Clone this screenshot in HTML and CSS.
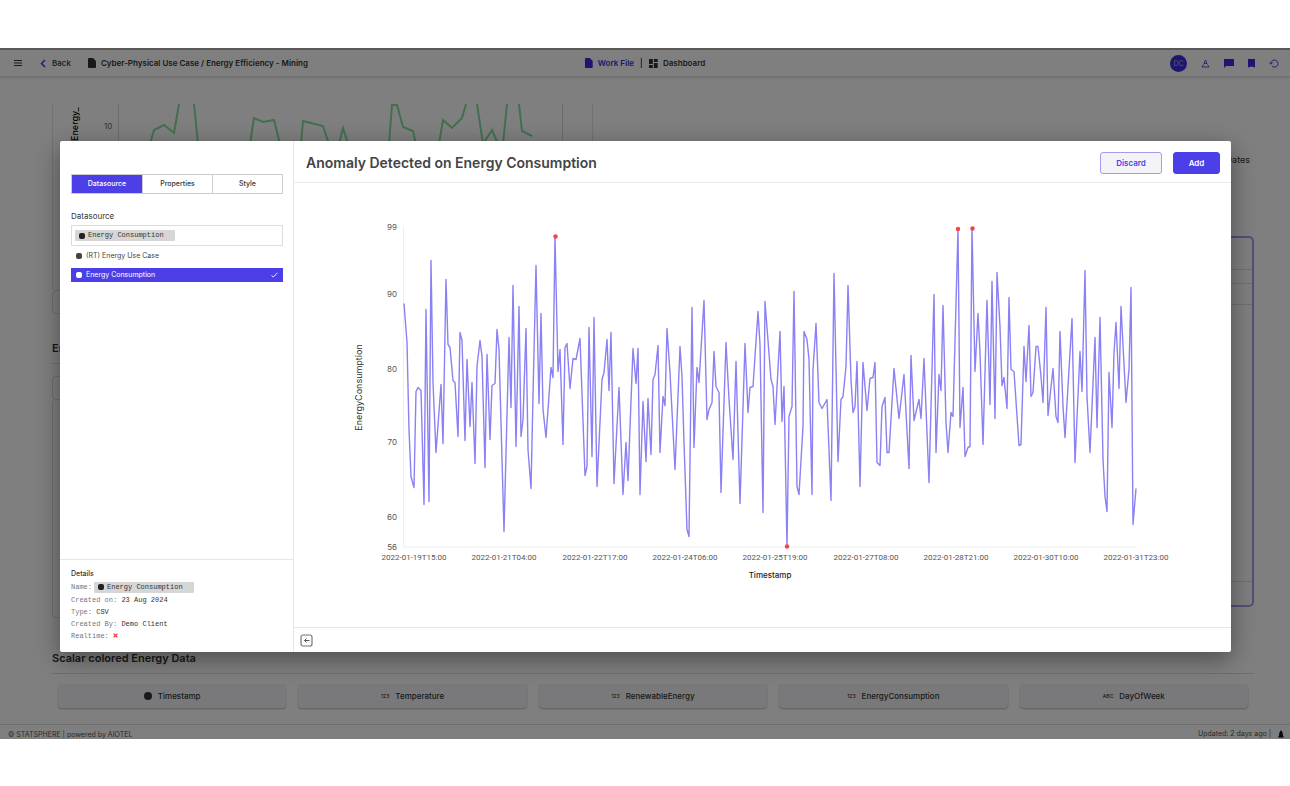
FILE: index.html
```html
<!DOCTYPE html>
<html lang="en">
<head>
<meta charset="utf-8">
<title>Energy Efficiency - Mining</title>
<link rel="stylesheet" href="styles.css">
</head>
<body>
<div class="app">
  <header class="topbar">
    <button class="icon-btn menu" aria-label="Menu"><svg width="8" height="8" viewBox="0 0 8 8"><path d="M0 1.5h8M0 4h8M0 6.5h8" stroke="currentColor" stroke-width="1.1"/></svg></button>
    <a href="#" class="back"><svg class="accent" width="6" height="9" viewBox="0 0 6 9"><path d="M5 1 1.5 4.500 5 8" fill="none" stroke="currentColor" stroke-width="1.4"/></svg>Back</a>
    <span class="crumb"><svg width="8" height="10" viewBox="0 0 8 10"><path d="M1 0h4l3 3v6q0 1-1 1H1q-1 0-1-1V1q0-1 1-1z" fill="currentColor"/></svg>Cyber-Physical Use Case / Energy Efficiency - Mining</span>
    <nav class="views">
      <a href="#" class="accent"><svg width="8" height="10" viewBox="0 0 8 10"><path d="M1 0h4l3 3v6q0 1-1 1H1q-1 0-1-1V1q0-1 1-1z" fill="currentColor"/></svg>Work File</a>
      <span class="bar"></span>
      <a href="#"><svg width="9" height="9" viewBox="0 0 9 9"><path d="M0 0h4v5H0zM5 0h4v3H5zM0 6h4v3H0zM5 4h4v5H5z" fill="currentColor"/></svg>Dashboard</a>
    </nav>
    <div class="tools accent">
      <span class="avatar">DC</span>
      <button class="icon-btn" aria-label="Download"><svg width="9" height="9" viewBox="0 0 9 9"><path d="M4.500 1 3 4.500h3L4.500 1M2.500 5.500 1 8h7L6.500 5.500" fill="none" stroke="currentColor" stroke-width=".8"/></svg></button>
      <button class="icon-btn" aria-label="Comments"><svg width="10" height="9" viewBox="0 0 10 9"><path d="M0 0h10v7H2L0 9z" fill="currentColor"/></svg></button>
      <button class="icon-btn" aria-label="Bookmark"><svg width="7" height="9" viewBox="0 0 7 9"><path d="M0 0h7v8.500L3.500 7.500 0 8.500z" fill="currentColor"/></svg></button>
      <button class="icon-btn" aria-label="History"><svg width="10" height="9" viewBox="0 0 10 9"><path d="M2 4.500a3.500 3.500 0 1 1 1 2.500M.3 3.500 2 5.200l1.600-1.700" fill="none" stroke="currentColor" stroke-width=".9"/></svg></button>
    </div>
  </header>

  <main class="work">
    <div class="columns">
      <div class="left-col">
        <div class="mini-card">
          <svg width="541" height="60" viewBox="52 104 541 60">
            <path d="M117.500 104v60M561.500 104v60" stroke="#d8d8d8"/>
            <text class="mini-axis" transform="translate(77 141) rotate(-90)">Energy_</text>
            <text class="mini-tick" x="103" y="129">10</text>
            <path class="mini-line" d="M149 144 153 130 163 125 173 133 178 104M193 104 197 144M249 144 253 118 262 122 273 120 279 144M300 144 302 121 322 126 328 144M338 144 342 128 347 144M388 144 391 105 396 105 402 127 412 131 415 144M438 144 442 120 451 128 461 118 465 104M476 104 482 144 491 130 497 144M502 144 506 104M518 104 521 131 531 136"/>
          </svg>
        </div>
        <div class="stub"></div>
        <h2>Energy</h2>
        <div class="stub"></div>
        <div class="tall"></div>
      </div>
      <div class="right-col">
        <p>Dates</p>
        <div class="selected"><i></i><i></i><i></i><i></i></div>
      </div>
    </div>
    <section class="fields">
      <h2>Scalar colored Energy Data</h2>
      <div class="chips">
        <button><svg width="8" height="8" viewBox="0 0 8 8"><circle cx="4" cy="4" r="4" fill="currentColor"/></svg>Timestamp</button>
        <button><small>123</small>Temperature</button>
        <button><small>123</small>RenewableEnergy</button>
        <button><small>123</small>EnergyConsumption</button>
        <button><small>ABC</small>DayOfWeek</button>
      </div>
    </section>
  </main>

  <footer class="foot">
    <span>© STATSPHERE | powered by AIOTEL</span>
    <span class="updated">Updated: 2 days ago |<svg width="6" height="8" viewBox="0 0 6 8"><path d="M3 0 4.800 3v2L6 7.500H0L1.200 5V3z" fill="#111"/></svg></span>
  </footer>

  <div class="overlay">
    <div class="modal" role="dialog" aria-labelledby="title">
      <aside class="side">
        <div class="settings">
          <div class="tabs" role="tablist">
            <button role="tab" aria-selected="true">Datasource</button>
            <button role="tab">Properties</button>
            <button role="tab">Style</button>
          </div>
          <label for="source">Datasource</label>
          <div class="combo">
            <span class="tag"><svg width="6" height="6" viewBox="0 0 6 6"><rect width="6" height="6" rx="2" fill="#222"/></svg>Energy Consumption</span>
            <input id="source" type="text">
          </div>
          <div class="options" role="listbox">
            <button role="option"><svg width="6" height="6" viewBox="0 0 6 6"><rect width="6" height="6" rx="2" fill="currentColor"/></svg>(RT) Energy Use Case</button>
            <button role="option" aria-selected="true"><svg width="6" height="6" viewBox="0 0 6 6"><rect width="6" height="6" rx="2" fill="currentColor"/></svg>Energy Consumption<svg class="tick" width="7" height="6" viewBox="0 0 7 6"><path d="M.5 3.500 2.300 5 6.500.8" fill="none" stroke="currentColor" stroke-width=".9"/></svg></button>
          </div>
        </div>
        <div class="details">
          <h3>Details</h3>
          <p class="named">Name:<span class="tag"><svg width="6" height="6" viewBox="0 0 6 6"><rect width="6" height="6" rx="2" fill="#222"/></svg>Energy Consumption</span></p>
          <p>Created on: <b>23 Aug 2024</b></p>
          <p>Type: <b>CSV</b></p>
          <p>Created By: <b>Demo Client</b></p>
          <p>Realtime: <svg width="5" height="5" viewBox="0 0 5 5"><path d="M.7.7l3.600 3.600M4.300.7.7 4.300" stroke="#f04a4a" stroke-width="1.500"/></svg></p>
        </div>
      </aside>
      <section class="body">
        <header class="body-head">
          <h1 id="title">Anomaly Detected on Energy Consumption</h1>
          <button class="discard">Discard</button>
          <button class="add">Add</button>
        </header>
        <div class="plot">
          <svg viewBox="294 184 937 443" role="img" aria-label="EnergyConsumption over Timestamp">
            <path d="M403.500 227V547.500H1137" fill="none" stroke="#eeeeee"/>
            <g class="tick-y">
              <text x="397" y="230">99</text><text x="397" y="297">90</text><text x="397" y="372">80</text><text x="397" y="445">70</text><text x="397" y="520">60</text><text x="397" y="550">56</text>
            </g>
            <g class="tick-x">
              <text x="414" y="560">2022-01-19T15:00</text><text x="504" y="560">2022-01-21T04:00</text><text x="595" y="560">2022-01-22T17:00</text><text x="685" y="560">2022-01-24T06:00</text><text x="775" y="560">2022-01-25T19:00</text><text x="866" y="560">2022-01-27T08:00</text><text x="956" y="560">2022-01-28T21:00</text><text x="1046" y="560">2022-01-30T10:00</text><text x="1136" y="560">2022-01-31T23:00</text>
            </g>
            <text class="name-x" x="770" y="578">Timestamp</text>
            <text class="name-y" transform="translate(362 388) rotate(-90)">EnergyConsumption</text>
            <polyline class="series" points="404,304 407,343 409,430 411,477 414,488 416,392 418,388 421,391 424,505 426,310 429,502 431,261 433,383 436,453 441,385 443,444 446,280 448,345 450,348 453,381 455,383 458,437 460,333 462,341 465,441 467,360 470,427 472,383 475,464 477,367 480,341 482,357 485,468 487,355 490,440 492,386 495,384 497,330 499,350 504,532 509,338 511,408 513,286 516,447 519,307 521,437 523,420 526,329 528,450 531,489 533,396 536,266 539,404 541,314 543,410 546,438 551,368 553,378 555,237 558,372 560,350 563,445 565,348 567,344 570,389 573,359 576,360 580,339 585,476 587,467 589,328 592,457 594,318 597,487 602,380 604,373 607,340 609,391 611,333 614,484 619,388 623,495 626,443 628,481 633,349 636,384 638,349 640,495 643,402 646,462 648,399 651,455 653,380 655,375 658,346 660,453 663,397 665,406 667,329 670,373 675,470 680,347 682,377 684,443 687,530 689,537 692,308 694,448 697,368 699,383 704,301 707,420 709,410 712,403 714,352 716,387 719,393 721,493 726,343 729,400 733,460 736,362 740,504 745,344 748,413 750,388 753,387 758,312 760,345 763,513 765,302 771,380 773,387 775,425 780,332 782,422 784,387 787,547 789,417 792,407 794,292 797,487 799,495 803,427 804,332 807,340 809,360 812,495 813,370 816,324 819,403 822,409 827,400 831,501 834,274 838,462 841,400 843,397 846,367 848,286 851,380 853,413 855,407 857,362 860,487 863,363 867,411 870,379 873,378 875,363 877,463 880,466 882,407 885,398 887,453 889,453 894,369 899,419 904,375 909,469 911,356 914,421 919,400 921,419 924,359 929,483 934,295 936,453 939,375 941,391 943,306 946,423 948,453 951,413 953,417 958,229 960,428 963,388 965,457 968,448 970,447 972,228 975,372 978,314 980,353 983,445 987,301 990,405 992,282 995,419 997,273 1000,327 1002,386 1004,378 1007,409 1009,298 1011,370 1014,372 1019,446 1021,445 1024,347 1026,382 1029,326 1031,397 1033,393 1036,347 1038,347 1041,377 1043,403 1046,308 1048,416 1053,369 1056,417 1058,423 1060,332 1063,407 1065,438 1072,319 1075,463 1080,352 1082,392 1085,271 1087,397 1090,453 1095,338 1097,428 1100,318 1103,460 1105,497 1107,512 1109,373 1112,428 1114,353 1116,323 1119,389 1121,307 1126,403 1129,370 1131,288 1133,525 1136,489"/>
            <g fill="#f5404e"><circle cx="555.500" cy="237" r="2.200"/><circle cx="787" cy="547" r="2.200"/><circle cx="958" cy="229.500" r="2.200"/><circle cx="972.500" cy="229" r="2.200"/></g>
          </svg>
        </div>
        <footer class="body-foot">
          <button class="icon-btn" aria-label="Toggle sidebar"><svg width="13" height="13" viewBox="0 0 13 13"><rect x="1" y="1" width="11" height="11" rx="2" fill="none" stroke="#777" stroke-width="1.200"/><path d="M9.500 6.500h-5M6.500 4.500l-2 2 2 2" fill="none" stroke="#555"/></svg></button>
        </footer>
      </section>
    </div>
  </div>
</div>
</body>
</html>
```

FILE: styles.css
```css
* { box-sizing: border-box; }
body { margin: 0; padding: 48px 0; min-height: 100vh; background: #fff; color: #333; font: 8px/12px Inter, "Liberation Sans", sans-serif; display: flex; }
button, input { font: inherit; color: inherit; }
button { padding: 0; cursor: pointer; }
a { color: inherit; text-decoration: none; }
h1, h2, h3, p { margin: 0; }
svg { flex: none; }
.accent { color: #3c2be0; }
.icon-btn { display: flex; border: 0; background: none; color: inherit; }

.app { position: relative; flex: 1; min-width: 0; display: flex; flex-direction: column; background: #fff; overflow: hidden; }
.topbar { display: flex; align-items: center; height: 29px; padding: 0 11px 0 14px; border-top: 2px solid #b2b2b2; border-bottom: 1px solid #e4e4e4; box-shadow: 0 1px 2px #ddd; font-weight: 600; }
.back, .crumb, .views, .views a { display: flex; align-items: center; }
.back { gap: 6px; margin-left: 18px; font-weight: 500; }
.crumb { gap: 5px; margin-left: 17px; }
.views { gap: 7px; position: absolute; left: 50%; transform: translateX(-50%); }
.views a { gap: 5px; }
.bar { width: 1px; height: 10px; background: #3c2be0; }
.tools { display: flex; align-items: center; gap: 14px; margin-left: auto; }
.avatar { width: 17px; height: 17px; line-height: 17px; border-radius: 50%; background: #3c2be0; color: #bbb; text-align: center; font-size: 7px; font-weight: 400; }

.work { flex: 1; padding: 27px 36px 0 52px; }
.columns { display: grid; grid-template-columns: 541px 1fr; height: 546px; }
.mini-card { height: 186px; overflow: hidden; border: solid #e4e4e4; border-width: 0 1px; }
.mini-card svg { display: block; }
.mini-axis { font-size: 9px; font-weight: 500; }
.mini-tick { font-size: 8px; fill: #666; }
.mini-line { fill: none; stroke: #86dfa0; stroke-width: 2; }
.stub { height: 24px; border: 1px solid #ddd; border-radius: 4px; }
h2 { font-size: 11px; font-weight: 600; line-height: 14px; }
.left-col h2 { padding: 27px 0 8px; border-bottom: 1px solid #ddd; margin-bottom: 12px; }
.tall { height: 218px; border: 1px solid #ddd; border-top: 0; border-radius: 4px; }
.right-col p { padding: 50px 4px 70px; text-align: right; font-size: 9px; }
.selected { height: 371px; border: 2px solid #a79ef0; border-radius: 5px; }
.selected i { display: block; border-bottom: 1px solid #ddd; height: 32px; }
.selected i:nth-child(2) { height: 14px; }
.selected i:nth-child(3) { height: 21px; }
.selected i:nth-child(4) { height: 277px; }
.fields h2 { padding: 1px 0 8px; border-bottom: 1px solid #ddd; }
.chips { display: grid; grid-template-columns: repeat(5, 1fr); gap: 12px; padding: 10px 6px 16px; }
.chips button { display: flex; align-items: center; justify-content: center; gap: 6px; height: 24px; border: 0; border-radius: 4px; background: #f2f2f6; box-shadow: 0 1px 2px #bbb; font-weight: 500; }
.chips small { font-size: 5px; }
.foot { display: flex; justify-content: space-between; padding: 4px 6px 0 8px; height: 15px; border-top: 1px solid #ddd; font-size: 7px; color: #555; }
.updated { display: flex; align-items: center; gap: 7px; }

.overlay { position: absolute; inset: 0; padding: 93px 59px 87px 60px; background: rgba(0, 0, 0, .5); display: flex; }
.modal { flex: 1; display: flex; min-width: 0; background: #fff; border-radius: 2px; box-shadow: 0 7px 24px rgba(0, 0, 0, .4); }
.side { width: 234px; flex: none; display: flex; flex-direction: column; border-right: 1px solid #e6e6e6; }
.settings { flex: 1; padding: 33px 10px 0 11px; }
.tabs { display: grid; grid-template-columns: repeat(3, 1fr); height: 20px; border: 1px solid #ccc; font-size: 7px; font-weight: 500; }
.tabs button { border: 0; border-left: 1px solid #ccc; background: none; }
.tabs button[aria-selected] { border: 0; background: #4d3fe8; color: #fff; }
.settings label { display: block; margin: 16px 0 3px; }
.combo { display: flex; align-items: center; height: 21px; padding: 0 3px; border: 1px solid #ddd; }
.combo input { flex: 1; min-width: 0; border: 0; outline: 0; background: none; }
.tag { display: inline-flex; align-items: center; gap: 3px; width: 100px; height: 11px; padding-left: 4px; border-radius: 1px; background: #d6d6d6; color: #333; font: 7px/11px "Liberation Mono", monospace; white-space: nowrap; }
.options { display: grid; gap: 5px; padding-top: 3px; font-size: 7px; }
.options button { display: flex; align-items: center; gap: 4px; height: 14px; padding: 0 5px; border: 0; background: none; color: #444; }
.options button[aria-selected] { background: #4d3fe8; color: #fff; }
.tick { margin-left: auto; }
.details { padding: 8px 11px 10px; border-top: 1px solid #e6e6e6; font: 7px/12px "Liberation Mono", monospace; color: #777; }
.details h3 { font: 500 7px/12px Inter, sans-serif; color: #333; }
.details p { height: 12px; white-space: pre; }
.details .named { display: flex; align-items: center; gap: 2px; height: 14px; }
.details b { font-weight: 400; color: #333; }

.body { flex: 1; min-width: 0; display: flex; flex-direction: column; }
.body-head { display: flex; align-items: center; gap: 11px; height: 42px; padding: 3px 11px 0 12px; border-bottom: 1px solid #eaeaea; }
.body-head h1 { flex: 1; font-size: 14px; line-height: 20px; font-weight: 600; color: #444; }
.body-head button { height: 22px; border-radius: 3px; font-weight: 600; border: 1px solid #4d3fe8; }
.body-head .discard { width: 62px; border-color: #a39bf2; background: #f3f3f8; color: #4d3fe8; }
.add { width: 47px; background: #4d3fe8; color: #fff; }
.plot { flex: 1; min-height: 0; display: flex; }
.plot svg { width: 100%; height: 100%; }
.plot text { fill: #555; font-size: 8px; text-anchor: middle; }
.plot .tick-y text { text-anchor: end; }
.plot .tick-x text { font-family: Roboto, sans-serif; }
.plot .name-x { fill: #222; font-weight: 500; }
.plot .name-y { fill: #333; font-size: 9px; }
.series { fill: none; stroke: #8a81f4; stroke-width: 1.4; stroke-linejoin: round; }
.body-foot { display: flex; align-items: center; height: 25px; padding-left: 6px; border-top: 1px solid #e6e6e6; }
```
